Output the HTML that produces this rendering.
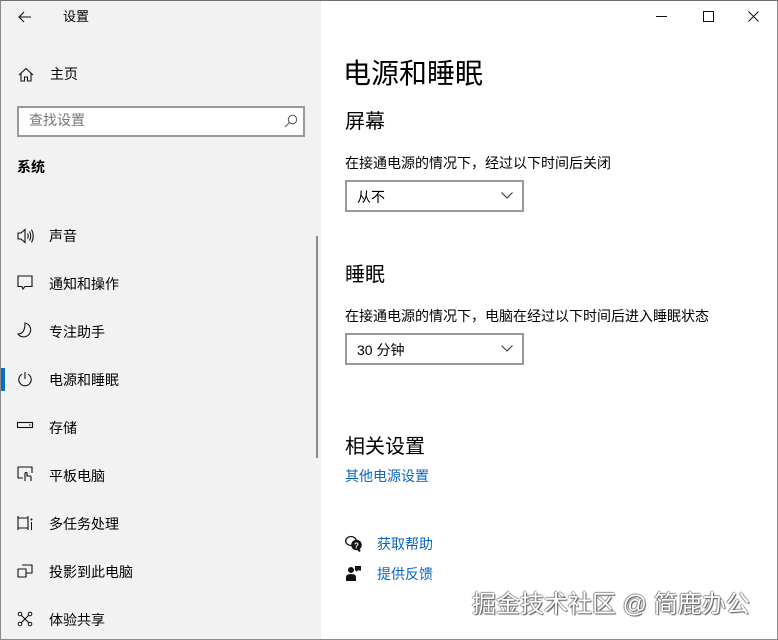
<!DOCTYPE html>
<html><head><meta charset="utf-8"><style>
*{margin:0;padding:0;box-sizing:border-box}
body{width:778px;height:640px;overflow:hidden;background:#fff;font-family:"Liberation Sans","Noto Sans CJK SC",sans-serif;color:#000;position:relative}
.frame{position:absolute;left:0;top:0;width:778px;height:640px;border:1px solid #8a8a8a;border-top:1px solid #6f6f6f;pointer-events:none}
.left{position:absolute;left:1px;top:1px;width:320px;height:638px;background:#f2f2f2}
.t{position:absolute;font-size:14px;line-height:18px;white-space:nowrap}
svg{position:absolute;overflow:visible}
.ic{stroke:#111;fill:none;stroke-width:1.1}
.dd{position:absolute;left:345px;width:179px;height:32px;border:2px solid #999;background:#fff}
.dd span{position:absolute;left:10px;top:5px;font-size:14px}
.link{color:#0a66c2}
</style></head><body>
<div class="left"></div>
<svg style="left:18px;top:10px" width="14" height="14"><path class="ic" d="M13 7H1M6 2L1 7L6 12"/></svg>
<div class="t" style="left:63px;top:8px;font-size:13px">设置</div>
<svg style="left:18px;top:67px" width="16" height="16"><path class="ic" d="M1 8L8 1.5L15 8M3 6.5V14H6.5V10H9.5V14H13V6.5"/></svg>
<div class="t" style="left:50px;top:65px">主页</div>
<div style="position:absolute;left:17px;top:106px;width:288px;height:31px;border:2px solid #999;background:#fff"></div>
<div class="t" style="left:29px;top:111px;color:#777">查找设置</div>
<svg style="left:284px;top:114px" width="14" height="14"><circle cx="8.5" cy="5.5" r="4.2" stroke="#555" fill="none" stroke-width="1"/><path d="M5.5 8.5L1 13" stroke="#555" stroke-width="1"/></svg>
<div class="t" style="left:17px;top:158px;font-weight:bold">系统</div>
<div style="position:absolute;left:316px;top:236px;width:2px;height:222px;background:#8a8a8a"></div>

<svg style="left:17px;top:228px" width="18" height="16"><path class="ic" d="M1 5H4L8 1.5V14.5L4 11H1Z"/><path class="ic" d="M10.5 5.5Q12 8 10.5 10.5M12.5 3.5Q15 8 12.5 12.5M14.5 1.5Q18 8 14.5 14.5"/></svg>
<div class="t" style="left:49px;top:227px">声音</div>
<svg style="left:17px;top:275px" width="16" height="16"><path class="ic" d="M1 1H15V11.5H8L6 14L5 11.5H1Z"/></svg>
<div class="t" style="left:49px;top:275px">通知和操作</div>
<svg style="left:17px;top:322px" width="16" height="16"><path class="ic" d="M8 1A7 7 0 1 1 1 12Q8 12 8 1Z"/></svg>
<div class="t" style="left:49px;top:323px">专注助手</div>
<div style="position:absolute;left:1px;top:368px;width:4px;height:23px;background:#0a6fc2"></div>
<svg style="left:17px;top:371px" width="16" height="16"><path class="ic" d="M5 3.2A6.2 6.2 0 1 0 11 3.2M8 1V8"/></svg>
<div class="t" style="left:49px;top:371px">电源和睡眠</div>
<svg style="left:17px;top:422px" width="16" height="8"><rect class="ic" x="0.5" y="0.5" width="15" height="5"/><path d="M12 3H13.5" stroke="#111"/></svg>
<div class="t" style="left:49px;top:419px">存储</div>
<svg style="left:17px;top:466px" width="16" height="16"><path class="ic" d="M6 12H1V1H15V7M8 15V7.5a1 1 0 0 1 2 0V10h3a1 1 0 0 1 1 1V15"/></svg>
<div class="t" style="left:49px;top:467px">平板电脑</div>
<svg style="left:17px;top:515px" width="16" height="16"><path class="ic" d="M1 1V15M1 3H11M1 13H11M11 1V15"/><circle cx="14.5" cy="4.5" r="1" fill="#111"/><path d="M14.5 7V15" stroke="#111"/></svg>
<div class="t" style="left:49px;top:515px">多任务处理</div>
<svg style="left:17px;top:564px" width="16" height="14"><path class="ic" d="M5 1H15V9H9M1 5H9V13H1Z"/></svg>
<div class="t" style="left:49px;top:563px">投影到此电脑</div>
<svg style="left:17px;top:611px" width="16" height="16"><path class="ic" d="M3 3L13 13M13 3L3 13"/><circle cx="3" cy="3" r="1.8" fill="#f2f2f2" stroke="#111"/><circle cx="13" cy="3" r="1.8" fill="#f2f2f2" stroke="#111"/><circle cx="3" cy="13" r="1.8" fill="#f2f2f2" stroke="#111"/><circle cx="13" cy="13" r="1.8" fill="#f2f2f2" stroke="#111"/></svg>
<div class="t" style="left:49px;top:611px">体验共享</div>

<svg style="left:656px;top:16px" width="12" height="2"><path d="M0 0.5H11" stroke="#111"/></svg>
<svg style="left:703px;top:11px" width="11" height="11"><rect x="0.5" y="0.5" width="10" height="10" fill="none" stroke="#111"/></svg>
<svg style="left:748px;top:11px" width="11" height="11"><path d="M0.5 0.5L10.5 10.5M10.5 0.5L0.5 10.5" stroke="#111"/></svg>

<div class="t" style="left:343px;top:56px;font-size:28px;line-height:36px">电源和睡眠</div>
<div class="t" style="left:345px;top:109px;font-size:20px;line-height:26px">屏幕</div>
<div class="t" style="left:345px;top:154px;font-size:14px">在接通电源的情况下，经过以下时间后关闭</div>
<div class="dd" style="top:180px"><span>从不</span><svg style="left:154px;top:10px" width="12" height="7"><path d="M0.5 0.5L6 6L11.5 0.5" stroke="#333" fill="none"/></svg></div>
<div class="t" style="left:345px;top:262px;font-size:20px;line-height:26px">睡眠</div>
<div class="t" style="left:345px;top:307px;font-size:14px">在接通电源的情况下，电脑在经过以下时间后进入睡眠状态</div>
<div class="dd" style="top:333px"><span>30 分钟</span><svg style="left:154px;top:10px" width="12" height="7"><path d="M0.5 0.5L6 6L11.5 0.5" stroke="#333" fill="none"/></svg></div>
<div class="t" style="left:345px;top:434px;font-size:20px;line-height:26px">相关设置</div>
<div class="t link" style="left:345px;top:467px">其他电源设置</div>
<svg style="left:345px;top:535px" width="18" height="17"><ellipse cx="6" cy="6" rx="5.3" ry="4.5" fill="#fff" stroke="#111" stroke-width="1.3"/><circle cx="11.5" cy="10" r="5.3" fill="#111"/><path d="M13 14L15 16.5" stroke="#111" stroke-width="2"/><text x="11.5" y="13.5" font-size="8" font-weight="bold" fill="#fff" text-anchor="middle" font-family="Liberation Sans">?</text></svg>
<div class="t link" style="left:377px;top:535px">获取帮助</div>
<svg style="left:346px;top:565px" width="16" height="16"><circle cx="5" cy="5" r="3" fill="#111"/><path d="M0 16V12Q0 9 5 9Q10 9 10 12V16Z" fill="#111"/><path d="M9 1H15V5.5H11.5L10 7V5.5H9Z" fill="#111"/></svg>
<div class="t link" style="left:377px;top:565px">提供反馈</div>
<div class="t" style="left:472px;top:590px;font-size:24px;line-height:30px;color:#fff;text-shadow:1px 1px 1px #555,-1px 0 1px #888,0 -1px 1px #999">掘金技术社区 @ 简鹿办公</div>
<div class="frame"></div>
</body></html>
